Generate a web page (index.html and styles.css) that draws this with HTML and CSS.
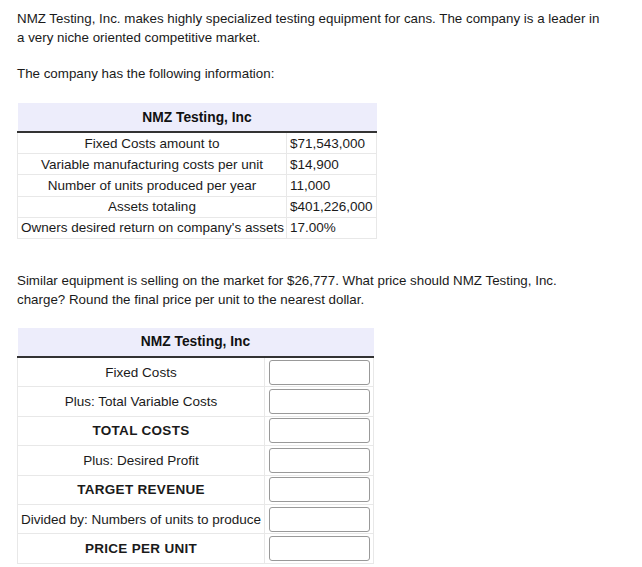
FILE: index.html
```html
<!DOCTYPE html>
<html>
<head>
<meta charset="utf-8">
<link rel="stylesheet" href="styles.css">
</head>
<body>
<div class="page">
  <p class="para first">NMZ Testing, Inc. makes highly specialized testing equipment for cans. The company is a leader in a very niche oriented competitive market.</p>
  <p class="para">The company has the following information:</p>

  <table class="info">
    <colgroup><col class="c-lbl"><col class="c-val"></colgroup>
    <thead>
      <tr><th colspan="2">NMZ Testing, Inc</th></tr>
    </thead>
    <tbody>
      <tr><td class="lbl">Fixed Costs amount to</td><td class="val">$71,543,000</td></tr>
      <tr><td class="lbl">Variable manufacturing costs per unit</td><td class="val">$14,900</td></tr>
      <tr><td class="lbl">Number of units produced per year</td><td class="val">11,000</td></tr>
      <tr><td class="lbl">Assets totaling</td><td class="val">$401,226,000</td></tr>
      <tr><td class="lbl">Owners desired return on company's assets</td><td class="val">17.00%</td></tr>
    </tbody>
  </table>

  <p class="para question">Similar equipment is selling on the market for $26,777. What price should NMZ Testing, Inc. charge? Round the final price per unit to the nearest dollar.</p>

  <table class="answer">
    <colgroup><col class="c-lbl"><col class="c-inp"></colgroup>
    <thead>
      <tr><th colspan="2">NMZ Testing, Inc</th></tr>
    </thead>
    <tbody>
      <tr><td class="lbl">Fixed Costs</td><td class="inp"><span class="box"></span></td></tr>
      <tr><td class="lbl">Plus: Total Variable Costs</td><td class="inp"><span class="box"></span></td></tr>
      <tr><td class="lbl strong">TOTAL COSTS</td><td class="inp"><span class="box"></span></td></tr>
      <tr><td class="lbl">Plus: Desired Profit</td><td class="inp"><span class="box"></span></td></tr>
      <tr><td class="lbl strong">TARGET REVENUE</td><td class="inp"><span class="box"></span></td></tr>
      <tr><td class="lbl">Divided by: Numbers of units to produce</td><td class="inp"><span class="box"></span></td></tr>
      <tr><td class="lbl strong">PRICE PER UNIT</td><td class="inp"><span class="box"></span></td></tr>
    </tbody>
  </table>
</div>
</body>
</html>
```

FILE: styles.css
```css
html, body {
  margin: 0;
  padding: 0;
  background: #ffffff;
}

body {
  font-family: "Liberation Sans", Arial, sans-serif;
  font-size: 13.5px;
  color: #1a1a1a;
}

.page {
  padding: 9px 17px 0 17px;
  width: 590px;
}

.para {
  margin: 17px 0 0 0;
  font-size: 13.35px;
  line-height: 19px;
}

.para.first {
  margin-top: 0;
}

.para.question {
  margin-top: 32px;
}

table {
  border-collapse: collapse;
  table-layout: fixed;
  margin-top: 20px;
  font-size: 13.5px;
}

th {
  background: #ededfb;
  font-weight: bold;
  font-size: 13.8px;
  height: 28px;
  padding: 0;
  text-align: center;
  border-bottom: 2px solid #333333;
  color: #111111;
}

td {
  border: 1px solid #e8e8e8;
  padding: 0 3px;
  white-space: nowrap;
}

.info {
  width: 360px;
}

.info .c-lbl {
  width: 269px;
}

.info td {
  height: 20.2px;
}

.info .lbl {
  text-align: center;
}

.info .val {
  text-align: left;
}

.answer {
  width: 357px;
  margin-top: 19px;
}

.answer .c-lbl {
  width: 247px;
}

.answer td {
  height: 28.4px;
}

.answer .lbl {
  text-align: center;
}

.answer .strong {
  font-weight: bold;
  letter-spacing: 0.3px;
}

.answer .inp {
  padding: 0 4px;
}

.box {
  display: block;
  width: 99px;
  height: 23px;
  border: 1px solid #999999;
  border-radius: 3px;
  background: #ffffff;
}
```
